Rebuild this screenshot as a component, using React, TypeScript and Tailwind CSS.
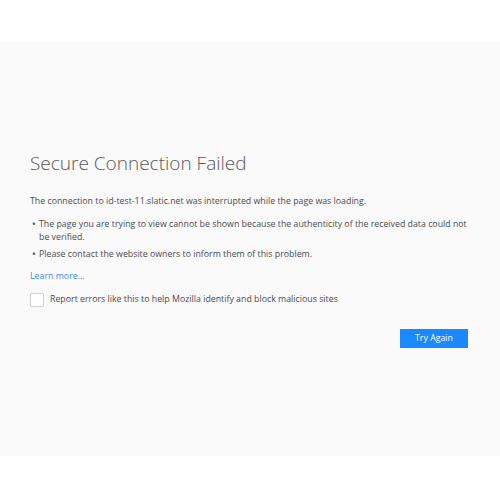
import React from "react";

// Firefox-style "Secure Connection Failed" error page
const App: React.FC = () => {
  return (
    <div className="w-[500px] h-[500px] bg-white pt-[42px] font-['Open_Sans',sans-serif]">
      <div className="h-[414px] bg-[#fafafa] pl-[30px] pr-[30px] pt-[107px] text-[#4a4a4f]">
        <h1 className="text-[19px] leading-[28px] font-light text-[#58585c]">
          Secure Connection Failed
        </h1>
        <p className="mt-[18px] text-[8.8px] leading-[13px]">
          The connection to id-test-11.slatic.net was interrupted while the page was loading.
        </p>
        <ul className="mt-[10px] text-[8.8px] leading-[13px]">
          <li className="flex">
            <span className="w-[9px] shrink-0 pl-[2px] text-[10px]">•</span>
            <span>
              The page you are trying to view cannot be shown because the authenticity of the received data could not be verified.
            </span>
          </li>
          <li className="flex mt-[4px]">
            <span className="w-[9px] shrink-0 pl-[2px] text-[10px]">•</span>
            <span>Please contact the website owners to inform them of this problem.</span>
          </li>
        </ul>
        <a className="block mt-[9px] text-[8.8px] leading-[13px] text-[#3d8ee6]">Learn more…</a>
        <label className="flex items-center mt-[10px] text-[8.8px]">
          <span className="w-[14px] h-[14px] border border-[#cfcfd4] bg-white rounded-[2px]" />
          <span className="ml-[6px]">Report errors like this to help Mozilla identify and block malicious sites</span>
        </label>
        <div className="flex justify-end mt-[22px] pr-[2px]">
          <button className="w-[68px] h-[19px] bg-[#1a88ff] text-white text-[8.8px]">
            Try Again
          </button>
        </div>
      </div>
    </div>
  );
};

export default App;
